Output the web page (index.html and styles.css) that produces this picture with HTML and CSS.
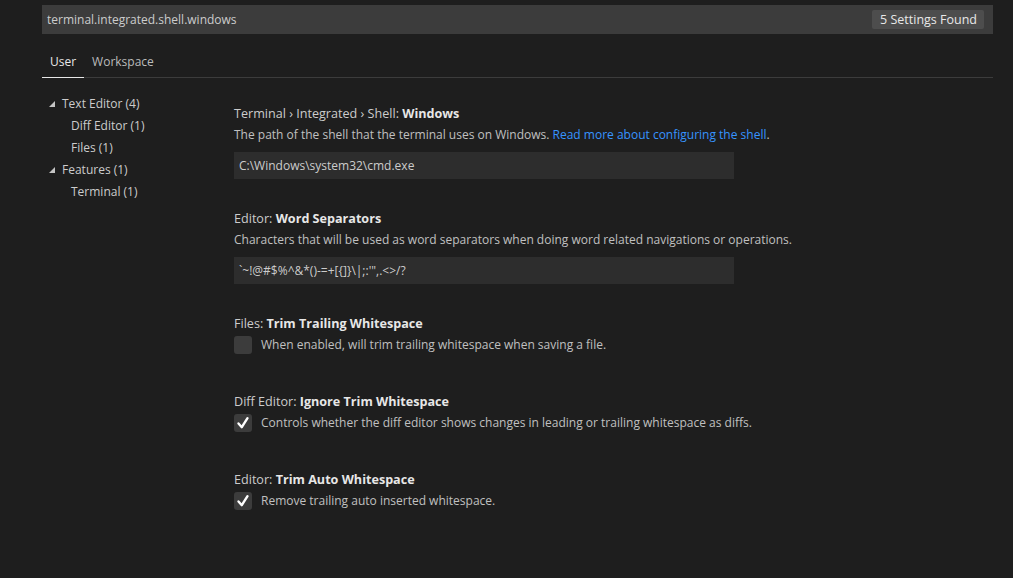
FILE: index.html
```html
<!DOCTYPE html>
<html>
<head>
<meta charset="utf-8">
<link rel="stylesheet" href="styles.css">
</head>
<body>
<div class="page">
  <div class="search">
    <span class="query">terminal.integrated.shell.windows</span>
    <span class="badge">5 Settings Found</span>
  </div>
  <div class="tabs">
    <span class="tab active">User</span>
    <span class="tab">Workspace</span>
  </div>
  <div class="body">
    <ul class="tree">
      <li class="group"><svg class="twist" width="6" height="6" viewBox="0 0 6 6"><path d="M6 0 L6 6 L0 6 Z" fill="#c5c5c5"/></svg>Text Editor (4)</li>
      <li class="leaf">Diff Editor (1)</li>
      <li class="leaf">Files (1)</li>
      <li class="group"><svg class="twist" width="6" height="6" viewBox="0 0 6 6"><path d="M6 0 L6 6 L0 6 Z" fill="#c5c5c5"/></svg>Features (1)</li>
      <li class="leaf">Terminal (1)</li>
    </ul>
    <div class="settings">
      <div class="setting text-setting">
        <div class="title">Terminal › Integrated › Shell: <b>Windows</b></div>
        <div class="desc">The path of the shell that the terminal uses on Windows. <a class="link">Read more about configuring the shell</a>.</div>
        <div class="input">C:\Windows\system32\cmd.exe</div>
      </div>
      <div class="setting text-setting">
        <div class="title">Editor: <b>Word Separators</b></div>
        <div class="desc">Characters that will be used as word separators when doing word related navigations or operations.</div>
        <div class="input">`~!@#$%^&amp;*()-=+[{]}\|;:'",.&lt;&gt;/?</div>
      </div>
      <div class="setting bool-setting">
        <div class="title">Files: <b>Trim Trailing Whitespace</b></div>
        <div class="row"><span class="check"></span><span class="desc">When enabled, will trim trailing whitespace when saving a file.</span></div>
      </div>
      <div class="setting bool-setting">
        <div class="title">Diff Editor: <b>Ignore Trim Whitespace</b></div>
        <div class="row"><span class="check"><svg width="18" height="18" viewBox="0 0 18 18"><path d="M4.5 9.5 L7.8 13.2 L13.5 4.2" fill="none" stroke="#ffffff" stroke-width="2.4" stroke-linecap="round" stroke-linejoin="round"/></svg></span><span class="desc">Controls whether the diff editor shows changes in leading or trailing whitespace as diffs.</span></div>
      </div>
      <div class="setting bool-setting">
        <div class="title">Editor: <b>Trim Auto Whitespace</b></div>
        <div class="row"><span class="check"><svg width="18" height="18" viewBox="0 0 18 18"><path d="M4.5 9.5 L7.8 13.2 L13.5 4.2" fill="none" stroke="#ffffff" stroke-width="2.4" stroke-linecap="round" stroke-linejoin="round"/></svg></span><span class="desc">Remove trailing auto inserted whitespace.</span></div>
      </div>
    </div>
  </div>
</div>
</body>
</html>
```

FILE: styles.css
```css
html, body {
  margin: 0;
  padding: 0;
  background: #1e1e1e;
  height: 100%;
}
body {
  font-family: "Open Sans", "Noto Sans", sans-serif;
  font-size: 12px;
  color: #cccccc;
}
.page {
  padding: 5px 20px 0 42px;
}
.search {
  height: 29px;
  background: #3c3c3c;
  display: flex;
  align-items: center;
  justify-content: space-between;
  padding: 0 9px 0 5px;
}
.query {
  color: #cccccc;
}
.badge {
  background: #4d4d4d;
  color: #e8e8e8;
  padding: 0 7px 0 8px;
  height: 19px;
  line-height: 19px;
  border-radius: 2px;
  font-size: 12.5px;
}
.tabs {
  display: flex;
  margin-top: 16px;
  border-bottom: 1px solid #3c3c3c;
}
.tab {
  padding: 1px 8px 4px;
  line-height: 22px;
  color: #bbbbbb;
  margin-bottom: -1px;
  border-bottom: 1px solid transparent;
}
.tab.active {
  color: #e7e7e7;
  border-bottom-color: #e7e7e7;
}
.body {
  display: flex;
}
.tree {
  list-style: none;
  margin: 15px 0 0 0;
  padding: 0;
  width: 192px;
}
.tree li {
  height: 22px;
  line-height: 22px;
  color: #cccccc;
}
.group {
  padding-left: 7px;
}
.twist {
  margin-right: 7px;
  vertical-align: 1px;
}
.leaf {
  padding-left: 29px;
}
.settings {
  flex: 1;
  padding-top: 26px;
}
.title {
  line-height: 20px;
  font-size: 12.6px;
  color: #cccccc;
}
.title b {
  color: #e7e7e7;
  font-weight: 700;
}
.desc {
  line-height: 20px;
  color: #c0c0c0;
  margin-top: 1px;
}
.link {
  color: #3794ff;
}
.input {
  margin-top: 7px;
  width: 495px;
  height: 27px;
  line-height: 27px;
  background: #2d2d2d;
  padding-left: 5px;
  color: #cccccc;
}
.text-setting {
  margin-bottom: 30px;
}
.bool-setting {
  margin-bottom: 37px;
}
.row {
  display: flex;
  align-items: center;
  margin-top: 1px;
}
.row .desc {
  margin-top: 0;
}
.check {
  width: 18px;
  height: 18px;
  border-radius: 3px;
  background: #3c3c3c;
  margin-right: 9px;
  display: flex;
}
```
